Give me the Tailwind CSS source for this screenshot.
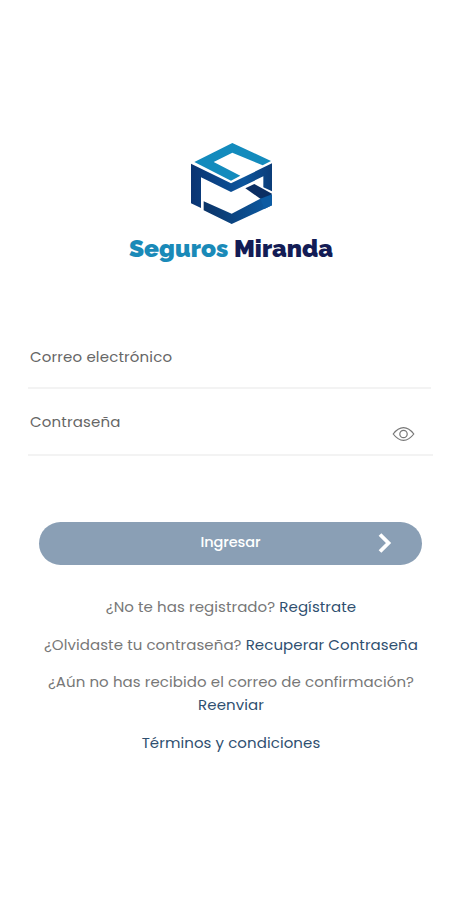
<!DOCTYPE html>
<html lang="es">
<head>
    <meta charset="UTF-8">
    <meta name="viewport" content="width=device-width, initial-scale=1.0">
    <title>Seguros Miranda</title>
    <script src="https://cdn.jsdelivr.net/npm/@tailwindcss/browser@4"></script>
</head>
<body class="bg-white font-[Poppins,Inter,sans-serif] text-[15px] text-[#777777]">
    <main class="flex h-[900px] w-[461px] flex-col pt-[135px]">
        <!-- Logo -->
        <header class="flex flex-col items-center">
            <svg class="h-[95px] w-[100px]" viewBox="0 0 300 285">
                <defs>
                    <linearGradient id="side" x1="0" x2="1" y1="0" y2="0">
                        <stop offset="0" stop-color="#0a3472" />
                        <stop offset="0.65" stop-color="#0c559c" />
                        <stop offset="1" stop-color="#0b3c78" />
                    </linearGradient>
                    <linearGradient id="base" x1="0" x2="1" y1="0" y2="0">
                        <stop offset="0" stop-color="#0b3468" />
                        <stop offset="1" stop-color="#0c5ba3" />
                    </linearGradient>
                </defs>
                <path fill="#138bbd" d="M40 81L154 24L270 78L245 91L154 53L98 81L178 122L150 137Z" />
                <path fill="url(#side)" d="M30 86L150 145L273 85V169L247 157V124L150 171L60 127V219L30 205Z" />
                <path fill="url(#base)" d="M68 199L152 236L238 191L273 180V211L152 267L68 226Z" />
                <path fill="#0b2e63" d="M193 160L220 147L273 176L262 194L238 191Z" />
                <path fill="#0c5ba3" d="M238 191L273 178V211L250 222Z" />
            </svg>
            <h1 class="whitespace-nowrap pt-px pl-px font-[Raleway,Inter,sans-serif] text-[24.5px] leading-9 font-black tracking-[0.05px] text-[#1a8ab8]">Seguros <span class="text-[#131c55]">Miranda</span></h1>
        </header>

        <!-- Login form -->
        <form class="mt-[74px] flex flex-col">
            <label class="ml-7 flex h-[48px] w-[403px] items-start border-b-2 border-[#f3f3f3] pl-0.5 leading-8 tracking-[0.16px] text-[#666666]">Correo electrónico</label>
            <label class="mt-[17px] ml-7 flex h-[50px] w-[405px] justify-between border-b-2 border-[#f3f3f3] pr-[18px] pl-0.5 leading-8 tracking-[0.16px] text-[#666666]">
                Contraseña
                <svg class="mt-5 h-4 w-[23px]" viewBox="0 0 23 16" fill="none" stroke="#777777" stroke-width="1.2">
                    <path d="M1.2 8Q6 1.7 11.5 1.7T21.8 8Q17 14.3 11.5 14.3T1.2 8Z" />
                    <circle cx="11.5" cy="8" r="3.7" />
                </svg>
            </label>
            <button type="button" class="mt-[65.5px] ml-[39px] grid h-[43px] w-[383px] grid-cols-[1fr_auto_1fr] items-center rounded-full bg-[#8a9fb5] text-[14.5px] font-medium tracking-[-0.1px] text-white">
                <span class="col-start-2">Ingresar</span>
                <svg class="mr-[30px] h-[22px] w-[14px] justify-self-end" viewBox="0 0 14 22" fill="none" stroke="white" stroke-width="3.8">
                    <path d="M2 2.5L10.5 11L2 19.5" />
                </svg>
            </button>
        </form>

        <!-- Account links -->
        <nav class="mt-[31.5px] flex flex-col gap-[15px] whitespace-nowrap pl-px text-center leading-[22.7px] tracking-[0.08px]">
            <p>¿No te has registrado? <a class="text-[#2f4f70]">Regístrate</a></p>
            <p>¿Olvidaste tu contraseña? <a class="text-[#2f4f70]">Recuperar Contraseña</a></p>
            <p>¿Aún no has recibido el correo de confirmación?<br><a class="text-[#2f4f70]">Reenviar</a></p>
            <p><a class="text-[#2f4f70]">Términos y condiciones</a></p>
        </nav>
    </main>
</body>
</html>
